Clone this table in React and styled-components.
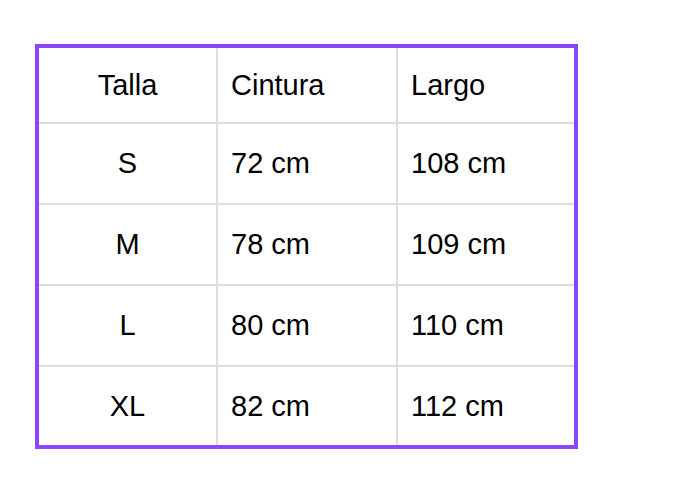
import React from 'react';
import styled, { createGlobalStyle } from 'styled-components';

const GlobalStyle = createGlobalStyle`
  body {
    margin: 0;
    background: #fff;
    font-family: "Liberation Sans", Arial, sans-serif;
  }
`;

const Page = styled.div`
  padding: 44px 35px;
`;

const Table = styled.table`
  border-collapse: separate;
  border-spacing: 0;
  border: 4px solid #8b45fb;
  font-family: "Liberation Sans", Arial, sans-serif;
  font-size: 29px;
  color: #000;
`;

const Cell = styled.td`
  box-sizing: border-box;
  padding: 0 13px;
  font-weight: normal;
  text-align: ${(p) => (p.$center ? 'center' : 'left')};
  vertical-align: middle;
  border-right: ${(p) => (p.$last ? 'none' : '2px solid #ddd')};
  border-bottom: ${(p) => (p.$bottom ? 'none' : '2px solid #ddd')};
  width: ${(p) => p.$w}px;
  height: ${(p) => p.$h}px;
  line-height: 1;
`;

const widths = [179, 180, 176];
const header = ['Talla', 'Cintura', 'Largo'];
const rows = [
  ['S', '72 cm', '108 cm'],
  ['M', '78 cm', '109 cm'],
  ['L', '80 cm', '110 cm'],
  ['XL', '82 cm', '112 cm'],
];

function SizeTable() {
  return (
    <Table>
      <thead>
        <tr>
          {header.map((h, i) => (
            <Cell as="th" key={h} $center={i === 0} $last={i === 2} $w={widths[i]} $h={76}>
              {h}
            </Cell>
          ))}
        </tr>
      </thead>
      <tbody>
        {rows.map((r, ri) => {
          const bottom = ri === rows.length - 1;
          return (
            <tr key={r[0]}>
              {r.map((c, i) => (
                <Cell
                  key={i}
                  $center={i === 0}
                  $last={i === 2}
                  $bottom={bottom}
                  $w={widths[i]}
                  $h={bottom ? 78 : 81}
                >
                  {c}
                </Cell>
              ))}
            </tr>
          );
        })}
      </tbody>
    </Table>
  );
}

export default function App() {
  return (
    <>
      <GlobalStyle />
      <Page>
        <SizeTable />
      </Page>
    </>
  );
}
